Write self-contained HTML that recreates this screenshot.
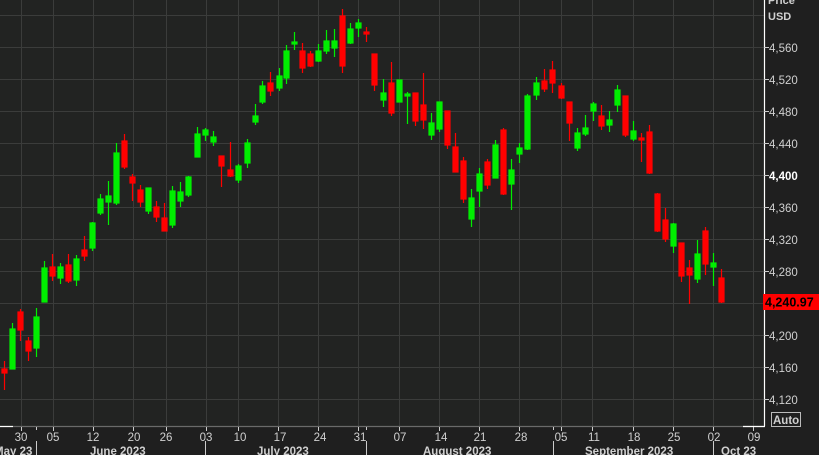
<!DOCTYPE html>
<html><head><meta charset="utf-8"><style>
html,body{margin:0;padding:0;background:#1f1f1f;}
svg{display:block}
text{font-family:"Liberation Sans",sans-serif;}
</style></head><body>
<svg width="819" height="455" viewBox="0 0 819 455" xmlns="http://www.w3.org/2000/svg">
<rect x="0" y="0" width="819" height="455" fill="#1f1f1f"/>
<rect x="0" y="0" width="764" height="426" fill="#222322"/>
<g stroke="#3b3c3b" stroke-width="1">
<line x1="0" y1="15.5" x2="764" y2="15.5"/><line x1="0" y1="47.5" x2="764" y2="47.5"/><line x1="0" y1="79.5" x2="764" y2="79.5"/><line x1="0" y1="111.5" x2="764" y2="111.5"/><line x1="0" y1="143.5" x2="764" y2="143.5"/><line x1="0" y1="175.5" x2="764" y2="175.5"/><line x1="0" y1="207.5" x2="764" y2="207.5"/><line x1="0" y1="239.5" x2="764" y2="239.5"/><line x1="0" y1="271.5" x2="764" y2="271.5"/><line x1="0" y1="303.5" x2="764" y2="303.5"/><line x1="0" y1="335.5" x2="764" y2="335.5"/><line x1="0" y1="367.5" x2="764" y2="367.5"/><line x1="0" y1="399.5" x2="764" y2="399.5"/>
<line x1="21.5" y1="0" x2="21.5" y2="426"/><line x1="53.5" y1="0" x2="53.5" y2="426"/><line x1="93.5" y1="0" x2="93.5" y2="426"/><line x1="133.5" y1="0" x2="133.5" y2="426"/><line x1="166.5" y1="0" x2="166.5" y2="426"/><line x1="206.5" y1="0" x2="206.5" y2="426"/><line x1="238.5" y1="0" x2="238.5" y2="426"/><line x1="278.5" y1="0" x2="278.5" y2="426"/><line x1="318.5" y1="0" x2="318.5" y2="426"/><line x1="358.5" y1="0" x2="358.5" y2="426"/><line x1="399.5" y1="0" x2="399.5" y2="426"/><line x1="439.5" y1="0" x2="439.5" y2="426"/><line x1="479.5" y1="0" x2="479.5" y2="426"/><line x1="519.5" y1="0" x2="519.5" y2="426"/><line x1="561.5" y1="0" x2="561.5" y2="426"/><line x1="592.5" y1="0" x2="592.5" y2="426"/><line x1="633.5" y1="0" x2="633.5" y2="426"/><line x1="673.5" y1="0" x2="673.5" y2="426"/><line x1="713.5" y1="0" x2="713.5" y2="426"/><line x1="753.5" y1="0" x2="753.5" y2="426"/>
</g>
<g stroke="#ff0000" fill="#ff0000" stroke-width="1.2">
<line x1="4.5" y1="361" x2="4.5" y2="390"/><rect x="2" y="369" width="5" height="4"/>
<line x1="20.5" y1="309" x2="20.5" y2="341"/><rect x="18" y="312" width="5" height="18"/>
<line x1="28.5" y1="337" x2="28.5" y2="361"/><rect x="26" y="341" width="5" height="10"/>
<line x1="52.5" y1="254" x2="52.5" y2="281"/><rect x="50" y="267" width="5" height="9"/>
<line x1="68.5" y1="254" x2="68.5" y2="283"/><rect x="66" y="265" width="5" height="16"/>
<line x1="84.5" y1="236" x2="84.5" y2="261"/><rect x="82" y="250" width="5" height="6"/>
<line x1="124.5" y1="134" x2="124.5" y2="169"/><rect x="122" y="141" width="5" height="26"/>
<line x1="132.5" y1="174" x2="132.5" y2="201"/><rect x="130" y="177" width="5" height="6"/>
<line x1="140.5" y1="185" x2="140.5" y2="207"/><rect x="138" y="190" width="5" height="12"/>
<line x1="156.5" y1="201" x2="156.5" y2="222"/><rect x="154" y="207" width="5" height="10"/>
<line x1="164.5" y1="203" x2="164.5" y2="231"/><rect x="162" y="218" width="5" height="13"/>
<line x1="221.5" y1="156" x2="221.5" y2="187"/><rect x="219" y="156" width="5" height="10"/>
<line x1="230.5" y1="142" x2="230.5" y2="177"/><rect x="228" y="170" width="5" height="6"/>
<line x1="270.5" y1="72" x2="270.5" y2="96"/><rect x="268" y="83" width="5" height="8"/>
<line x1="302.5" y1="43" x2="302.5" y2="73"/><rect x="300" y="51" width="5" height="17"/>
<line x1="310.5" y1="51" x2="310.5" y2="67"/><rect x="308" y="54" width="5" height="12"/>
<line x1="342.5" y1="9" x2="342.5" y2="73"/><rect x="340" y="16" width="5" height="50"/>
<line x1="366.5" y1="27" x2="366.5" y2="42"/><rect x="364" y="32" width="5" height="2"/>
<line x1="374.5" y1="54" x2="374.5" y2="91"/><rect x="372" y="54" width="5" height="31"/>
<line x1="391.5" y1="62" x2="391.5" y2="116"/><rect x="389" y="83" width="5" height="30"/>
<line x1="415.5" y1="93" x2="415.5" y2="126"/><rect x="413" y="93" width="5" height="28"/>
<line x1="423.5" y1="73" x2="423.5" y2="129"/><rect x="421" y="105" width="5" height="15"/>
<line x1="447.5" y1="111" x2="447.5" y2="149"/><rect x="445" y="111" width="5" height="34"/>
<line x1="455.5" y1="133" x2="455.5" y2="172"/><rect x="453" y="147" width="5" height="25"/>
<line x1="463.5" y1="157" x2="463.5" y2="203"/><rect x="461" y="161" width="5" height="38"/>
<line x1="487.5" y1="159" x2="487.5" y2="189"/><rect x="485" y="162" width="5" height="23"/>
<line x1="503.5" y1="128" x2="503.5" y2="195"/><rect x="501" y="130" width="5" height="64"/>
<line x1="544.5" y1="69" x2="544.5" y2="92"/><rect x="542" y="81" width="5" height="8"/>
<line x1="552.5" y1="61" x2="552.5" y2="93"/><rect x="550" y="70" width="5" height="13"/>
<line x1="561.5" y1="83" x2="561.5" y2="99"/><rect x="559" y="86" width="5" height="12"/>
<line x1="569.5" y1="102" x2="569.5" y2="141"/><rect x="567" y="102" width="5" height="21"/>
<line x1="601.5" y1="105" x2="601.5" y2="130"/><rect x="599" y="116" width="5" height="10"/>
<line x1="625.5" y1="96" x2="625.5" y2="137"/><rect x="623" y="96" width="5" height="39"/>
<line x1="641.5" y1="133" x2="641.5" y2="162"/><rect x="639" y="138" width="5" height="2"/>
<line x1="649.5" y1="125" x2="649.5" y2="174"/><rect x="647" y="132" width="5" height="41"/>
<line x1="657.5" y1="193" x2="657.5" y2="232"/><rect x="655" y="194" width="5" height="37"/>
<line x1="665.5" y1="208" x2="665.5" y2="242"/><rect x="663" y="220" width="5" height="19"/>
<line x1="681.5" y1="243" x2="681.5" y2="282"/><rect x="679" y="243" width="5" height="33"/>
<line x1="689.5" y1="260" x2="689.5" y2="304"/><rect x="687" y="268" width="5" height="7"/>
<line x1="705.5" y1="227" x2="705.5" y2="275"/><rect x="703" y="231" width="5" height="33"/>
<line x1="721.5" y1="269" x2="721.5" y2="303"/><rect x="719" y="278" width="5" height="24"/>
</g>
<g stroke="#00ee00" fill="#00ee00" stroke-width="1.2">
<line x1="12.5" y1="323" x2="12.5" y2="369"/><rect x="10" y="329" width="5" height="40"/>
<line x1="36.5" y1="308" x2="36.5" y2="357"/><rect x="34" y="317" width="5" height="31"/>
<line x1="44.5" y1="261" x2="44.5" y2="302"/><rect x="42" y="268" width="5" height="34"/>
<line x1="60.5" y1="263" x2="60.5" y2="284"/><rect x="58" y="267" width="5" height="11"/>
<line x1="76.5" y1="255" x2="76.5" y2="286"/><rect x="74" y="259" width="5" height="21"/>
<line x1="92.5" y1="222" x2="92.5" y2="251"/><rect x="90" y="223" width="5" height="25"/>
<line x1="100.5" y1="194" x2="100.5" y2="215"/><rect x="98" y="199" width="5" height="14"/>
<line x1="108.5" y1="181" x2="108.5" y2="225"/><rect x="106" y="196" width="5" height="6"/>
<line x1="116.5" y1="143" x2="116.5" y2="205"/><rect x="114" y="153" width="5" height="50"/>
<line x1="148.5" y1="188" x2="148.5" y2="214"/><rect x="146" y="188" width="5" height="23"/>
<line x1="172.5" y1="186" x2="172.5" y2="228"/><rect x="170" y="191" width="5" height="34"/>
<line x1="180.5" y1="182" x2="180.5" y2="207"/><rect x="178" y="192" width="5" height="9"/>
<line x1="188.5" y1="176" x2="188.5" y2="197"/><rect x="186" y="177" width="5" height="18"/>
<line x1="197.5" y1="127" x2="197.5" y2="157"/><rect x="195" y="134" width="5" height="23"/>
<line x1="205.5" y1="128" x2="205.5" y2="141"/><rect x="203" y="130" width="5" height="5"/>
<line x1="213.5" y1="131" x2="213.5" y2="146"/><rect x="211" y="137" width="5" height="5"/>
<line x1="238.5" y1="164" x2="238.5" y2="183"/><rect x="236" y="166" width="5" height="14"/>
<line x1="247.5" y1="139" x2="247.5" y2="168"/><rect x="245" y="143" width="5" height="20"/>
<line x1="255.5" y1="104" x2="255.5" y2="125"/><rect x="253" y="116" width="5" height="6"/>
<line x1="262.5" y1="81" x2="262.5" y2="104"/><rect x="260" y="86" width="5" height="16"/>
<line x1="279.5" y1="68" x2="279.5" y2="91"/><rect x="277" y="76" width="5" height="12"/>
<line x1="286.5" y1="45" x2="286.5" y2="84"/><rect x="284" y="51" width="5" height="27"/>
<line x1="294.5" y1="32" x2="294.5" y2="50"/><rect x="292" y="42" width="5" height="2"/>
<line x1="318.5" y1="44" x2="318.5" y2="62"/><rect x="316" y="51" width="5" height="10"/>
<line x1="326.5" y1="30" x2="326.5" y2="54"/><rect x="324" y="41" width="5" height="10"/>
<line x1="334.5" y1="29" x2="334.5" y2="57"/><rect x="332" y="41" width="5" height="7"/>
<line x1="350.5" y1="23" x2="350.5" y2="44"/><rect x="348" y="29" width="5" height="14"/>
<line x1="358.5" y1="19" x2="358.5" y2="37"/><rect x="356" y="23" width="5" height="5"/>
<line x1="383.5" y1="79" x2="383.5" y2="107"/><rect x="381" y="93" width="5" height="7"/>
<line x1="399.5" y1="80" x2="399.5" y2="102"/><rect x="397" y="80" width="5" height="22"/>
<line x1="407.5" y1="92" x2="407.5" y2="124"/><rect x="405" y="94" width="5" height="2"/>
<line x1="431.5" y1="113" x2="431.5" y2="140"/><rect x="429" y="123" width="5" height="12"/>
<line x1="439.5" y1="102" x2="439.5" y2="132"/><rect x="437" y="102" width="5" height="27"/>
<line x1="471.5" y1="189" x2="471.5" y2="227"/><rect x="469" y="198" width="5" height="21"/>
<line x1="479.5" y1="168" x2="479.5" y2="207"/><rect x="477" y="174" width="5" height="17"/>
<line x1="495.5" y1="140" x2="495.5" y2="178"/><rect x="493" y="145" width="5" height="33"/>
<line x1="511.5" y1="159" x2="511.5" y2="210"/><rect x="509" y="170" width="5" height="14"/>
<line x1="519.5" y1="143" x2="519.5" y2="163"/><rect x="517" y="148" width="5" height="6"/>
<line x1="527.5" y1="94" x2="527.5" y2="150"/><rect x="525" y="96" width="5" height="53"/>
<line x1="536.5" y1="77" x2="536.5" y2="100"/><rect x="534" y="83" width="5" height="12"/>
<line x1="577.5" y1="128" x2="577.5" y2="151"/><rect x="575" y="133" width="5" height="15"/>
<line x1="585.5" y1="115" x2="585.5" y2="136"/><rect x="583" y="128" width="5" height="6"/>
<line x1="593.5" y1="102" x2="593.5" y2="121"/><rect x="591" y="104" width="5" height="7"/>
<line x1="609.5" y1="111" x2="609.5" y2="132"/><rect x="607" y="120" width="5" height="5"/>
<line x1="617.5" y1="85" x2="617.5" y2="112"/><rect x="615" y="90" width="5" height="15"/>
<line x1="633.5" y1="121" x2="633.5" y2="141"/><rect x="631" y="131" width="5" height="8"/>
<line x1="673.5" y1="223" x2="673.5" y2="253"/><rect x="671" y="224" width="5" height="22"/>
<line x1="697.5" y1="240" x2="697.5" y2="283"/><rect x="695" y="254" width="5" height="25"/>
<line x1="713.5" y1="253" x2="713.5" y2="286"/><rect x="711" y="263" width="5" height="4"/>
</g>
<line x1="764.5" y1="0" x2="764.5" y2="426" stroke="#ffffff" stroke-width="1.2"/>
<line x1="0" y1="426.5" x2="764" y2="426.5" stroke="#6a6a6a" stroke-width="1.2"/>
<line x1="0" y1="426.5" x2="13" y2="426.5" stroke="#ffffff" stroke-width="1.2"/>
<line x1="743" y1="426.5" x2="765" y2="426.5" stroke="#ffffff" stroke-width="1.2"/>
<g stroke="#cccccc" stroke-width="1">
<line x1="764" y1="47.5" x2="769" y2="47.5"/><line x1="764" y1="79.5" x2="769" y2="79.5"/><line x1="764" y1="111.5" x2="769" y2="111.5"/><line x1="764" y1="143.5" x2="769" y2="143.5"/><line x1="764" y1="175.5" x2="769" y2="175.5"/><line x1="764" y1="207.5" x2="769" y2="207.5"/><line x1="764" y1="239.5" x2="769" y2="239.5"/><line x1="764" y1="271.5" x2="769" y2="271.5"/><line x1="764" y1="335.5" x2="769" y2="335.5"/><line x1="764" y1="367.5" x2="769" y2="367.5"/><line x1="764" y1="399.5" x2="769" y2="399.5"/>
<line x1="21.5" y1="427" x2="21.5" y2="431"/><line x1="36.5" y1="427" x2="36.5" y2="430"/><line x1="53.5" y1="427" x2="53.5" y2="431"/><line x1="93.5" y1="427" x2="93.5" y2="431"/><line x1="133.5" y1="427" x2="133.5" y2="431"/><line x1="166.5" y1="427" x2="166.5" y2="431"/><line x1="206.5" y1="427" x2="206.5" y2="431"/><line x1="238.5" y1="427" x2="238.5" y2="431"/><line x1="278.5" y1="427" x2="278.5" y2="431"/><line x1="318.5" y1="427" x2="318.5" y2="431"/><line x1="358.5" y1="427" x2="358.5" y2="431"/><line x1="366.5" y1="427" x2="366.5" y2="430"/><line x1="399.5" y1="427" x2="399.5" y2="431"/><line x1="439.5" y1="427" x2="439.5" y2="431"/><line x1="479.5" y1="427" x2="479.5" y2="431"/><line x1="519.5" y1="427" x2="519.5" y2="431"/><line x1="553.5" y1="427" x2="553.5" y2="430"/><line x1="561.5" y1="427" x2="561.5" y2="431"/><line x1="592.5" y1="427" x2="592.5" y2="431"/><line x1="633.5" y1="427" x2="633.5" y2="431"/><line x1="673.5" y1="427" x2="673.5" y2="431"/><line x1="713.5" y1="427" x2="713.5" y2="431"/><line x1="753.5" y1="427" x2="753.5" y2="431"/>
<line x1="36.5" y1="441" x2="36.5" y2="455"/><line x1="205.5" y1="441" x2="205.5" y2="455"/><line x1="366.5" y1="441" x2="366.5" y2="455"/><line x1="553.5" y1="441" x2="553.5" y2="455"/><line x1="713.5" y1="441" x2="713.5" y2="455"/>
</g>
<text x="768" y="4" font-weight="bold" font-size="11" fill="#d0d0d0">Price</text>
<text x="768" y="20" font-weight="bold" font-size="11" fill="#d0d0d0">USD</text>
<g fill="#d0d0d0" font-size="11.5">
<text x="769" y="52">4,560</text>
<text x="769" y="84">4,520</text>
<text x="769" y="116">4,480</text>
<text x="769" y="148">4,440</text>
<text x="769" y="180" font-weight="bold" fill="#ffffff">4,400</text>
<text x="769" y="212">4,360</text>
<text x="769" y="244">4,320</text>
<text x="769" y="276">4,280</text>
<text x="769" y="340">4,200</text>
<text x="769" y="372">4,160</text>
<text x="769" y="404">4,120</text>
</g>
<rect x="763" y="294" width="56" height="16" fill="#ff0000"/>
<text x="765" y="306.5" font-weight="bold" font-size="12.5" fill="#000000">4,240.97</text>
<rect x="771.5" y="412.5" width="29" height="14" fill="none" stroke="#bbbbbb"/>
<text x="773" y="424" font-weight="bold" font-size="11.5" fill="#d0d0d0">Auto</text>
<g fill="#d0d0d0" font-size="11.5" text-anchor="middle">
<text x="21" y="441">30</text><text x="53" y="441">05</text><text x="93" y="441">12</text><text x="134" y="441">20</text><text x="166" y="441">26</text><text x="206" y="441">03</text><text x="240" y="441">10</text><text x="280" y="441">17</text><text x="320" y="441">24</text><text x="360" y="441">31</text><text x="400" y="441">07</text><text x="441" y="441">14</text><text x="480" y="441">21</text><text x="521" y="441">28</text><text x="561" y="441">05</text><text x="594" y="441">11</text><text x="634" y="441">18</text><text x="674" y="441">25</text><text x="714" y="441">02</text><text x="754" y="441">09</text>
</g>
<g fill="#d0d0d0" font-size="11.5" font-weight="bold">
<text x="-6" y="455">May 23</text>
<text x="90" y="455">June 2023</text>
<text x="257" y="455">July 2023</text>
<text x="423" y="455">August 2023</text>
<text x="585" y="455">September 2023</text>
<text x="721" y="455">Oct 23</text>
</g>
</svg>
</body></html>
